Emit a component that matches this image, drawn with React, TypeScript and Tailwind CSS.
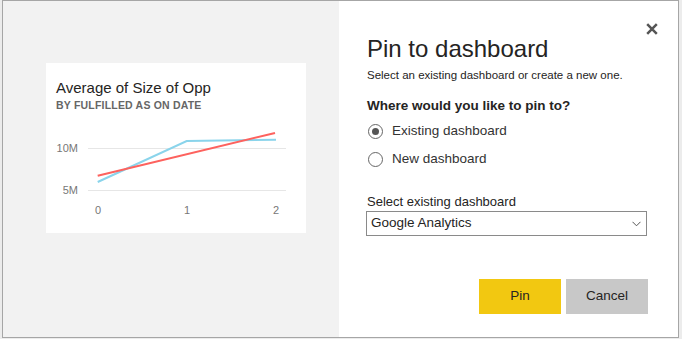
const font = { fontFamily: '"Liberation Sans", Arial, sans-serif' };

function ChartCard() {
  return (
    <div className="w-[260px] h-[170px] bg-white pt-[15px] pl-[10px]">
      <div className="text-[15px] leading-[20px] text-[#252423]">Average of Size of Opp</div>
      <div className="text-[10.5px] leading-[14px] font-bold text-[#666] tracking-[0.2px]">BY FULFILLED AS ON DATE</div>
      <svg width="260" height="118" viewBox="0 0 260 118" className="mt-[3px] -ml-[10px] block">
        <line x1="42" y1="33.5" x2="240" y2="33.5" stroke="#e6e6e6" strokeWidth="1" />
        <line x1="42" y1="75.5" x2="240" y2="75.5" stroke="#e6e6e6" strokeWidth="1" />
        <text x="32" y="37" textAnchor="end" fontSize="11" fill="#777" fontFamily="Liberation Sans, Arial, sans-serif">10M</text>
        <text x="32" y="79" textAnchor="end" fontSize="11" fill="#777" fontFamily="Liberation Sans, Arial, sans-serif">5M</text>
        <text x="52" y="99" textAnchor="middle" fontSize="11" fill="#777" fontFamily="Liberation Sans, Arial, sans-serif">0</text>
        <text x="141" y="99" textAnchor="middle" fontSize="11" fill="#777" fontFamily="Liberation Sans, Arial, sans-serif">1</text>
        <text x="230" y="99" textAnchor="middle" fontSize="11" fill="#777" fontFamily="Liberation Sans, Arial, sans-serif">2</text>
        <polyline points="51.7,67 140.7,26 230,24.7" fill="none" stroke="#8ad4eb" strokeWidth="2" />
        <polyline points="51.7,60.7 229,18" fill="none" stroke="#fd625e" strokeWidth="2" />
      </svg>
    </div>
  );
}

function Radio({ checked, label }: { checked?: boolean; label: string }) {
  return (
    <div className="flex items-center h-[20px]">
      <div className="ml-[2px] w-[15px] h-[15px] rounded-full border-[1.5px] border-[#666] flex items-center justify-center">
        {checked && <div className="w-[7px] h-[7px] rounded-full bg-[#555]" />}
      </div>
      <span className="ml-[9px] text-[13.5px] text-[#333]">{label}</span>
    </div>
  );
}

export default function App() {
  return (
    <div className="w-[682px] h-[339px] bg-[#ececec] overflow-hidden" style={font}>
      <div className="ml-[2px] w-[677px] h-[338px] border border-[#a6a6a6] flex">
        <div className="w-[337px] h-full bg-[#f2f2f2] pt-[62px] pl-[43px]">
          <ChartCard />
        </div>
        <div className="relative flex-1 bg-white pt-[33px] pl-[27px] pr-[30px]">
          <button type="button" className="absolute top-[22px] right-[20px]">
            <svg width="12" height="12" viewBox="0 0 12 12">
              <path d="M1.2 1.2 L10.8 10.8 M10.8 1.2 L1.2 10.8" stroke="#555" strokeWidth="2.5" />
            </svg>
          </button>
          <h1 className="text-[24px] leading-[30px] text-[#252423] pl-[1px]">Pin to dashboard</h1>
          <p className="mt-[3px] text-[11.5px] leading-[16px] text-[#252423] pl-[1px]">
            Select an existing dashboard or create a new one.
          </p>
          <div className="mt-[14px] text-[13.5px] leading-[18px] font-bold text-[#252423] pl-[1px]">
            Where would you like to pin to?
          </div>
          <div className="mt-[6px] flex flex-col gap-[8px]">
            <Radio checked label="Existing dashboard" />
            <Radio label="New dashboard" />
          </div>
          <div className="mt-[25px] text-[13px] leading-[16px] text-[#252423] pl-[1px]">Select existing dashboard</div>
          <div className="mt-[1px] w-[281px] h-[25px] border border-[#8a8a8a] flex items-center justify-between pl-[4px] pr-[5px]">
            <span className="text-[13.5px] text-[#252423]">Google Analytics</span>
            <svg width="9" height="6" viewBox="0 0 9 6" className="mt-[1px]">
              <path d="M0.5 0.8 L4.5 4.8 L8.5 0.8" fill="none" stroke="#555" strokeWidth="1" />
            </svg>
          </div>
          <div className="mt-[43px] flex justify-end gap-[5px] w-[282px]">
            <button type="button" className="w-[82px] h-[35px] bg-[#f2c811] text-[13.5px] text-[#252423]">Pin</button>
            <button type="button" className="w-[82px] h-[35px] bg-[#c8c8c8] text-[13.5px] text-[#252423]">Cancel</button>
          </div>
        </div>
      </div>
    </div>
  );
}
